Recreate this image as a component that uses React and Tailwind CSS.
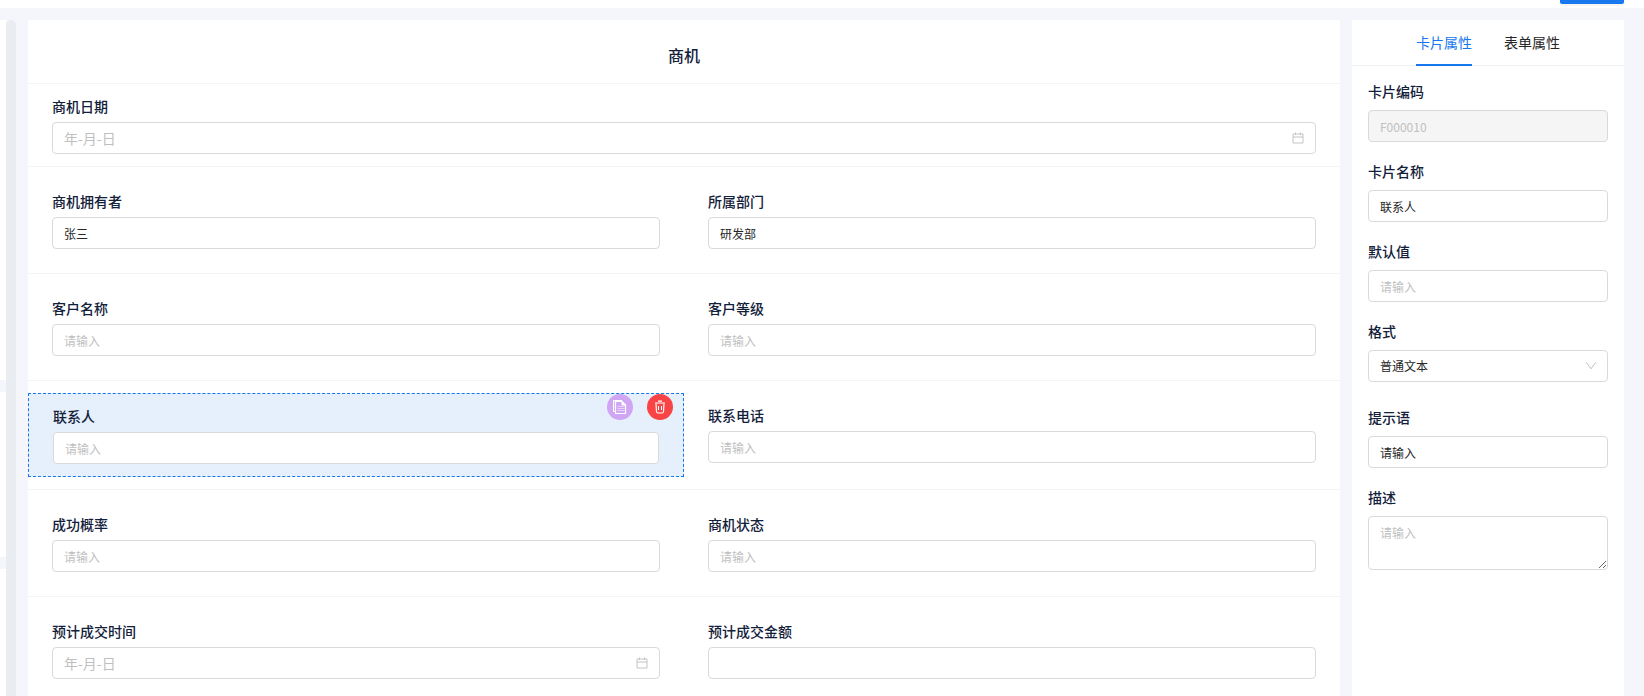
import React, { useState } from "react";
import clsx from "clsx";

const LEFT_CARDS = ["h-[360px]", "h-[165px]", "flex-1"];

const ROWS = [
  [
    { id: "owner", label: "商机拥有者", value: "张三" },
    { id: "dept", label: "所属部门", value: "研发部" },
  ],
  [
    { id: "customer", label: "客户名称", placeholder: "请输入" },
    { id: "level", label: "客户等级", placeholder: "请输入" },
  ],
  [
    { id: "contact", label: "联系人", placeholder: "请输入" },
    { id: "phone", label: "联系电话", placeholder: "请输入" },
  ],
  [
    { id: "rate", label: "成功概率", placeholder: "请输入" },
    { id: "status", label: "商机状态", placeholder: "请输入" },
  ],
  [
    { id: "dealDate", label: "预计成交时间", placeholder: "年-月-日", type: "date" },
    { id: "dealAmount", label: "预计成交金额" },
  ],
];

const inputClass =
  "block w-full h-8 px-[11px] bg-white border border-[#d9d9d9] rounded text-[#262626] placeholder:text-[#bfbfbf] outline-none focus:border-[#1677ee]";

function CalendarIcon() {
  return (
    <svg viewBox="0 0 12 12" className="w-3 h-3" fill="none" stroke="#c4c4c4" aria-hidden="true">
      <path d="M1 2h10v9H1zM1 5h10M3.5 .5v2.5M8.5 .5v2.5" />
    </svg>
  );
}

function CopyIcon() {
  return (
    <svg viewBox="0 0 14 14" className="w-3.5 h-3.5" fill="none" stroke="#fff" aria-hidden="true">
      <path d="M2.5 11.5h-2v-11h8.5" strokeWidth="1.2" />
      <path d="M2.5 1.5h6.5l3.5 3.5v8.5h-10z" strokeWidth="1.2" />
      <path d="M9 1.5l3.5 3.5H9z" fill="#fff" />
      <path d="M4.5 6.5h7M4.5 8.5h7M4.5 10.5h7" strokeOpacity=".5" />
    </svg>
  );
}

function TrashIcon() {
  return (
    <svg viewBox="0 0 14 14" className="w-3.5 h-3.5" fill="none" stroke="#fff" aria-hidden="true">
      <path d="M2 3h10M5 1.2h4" strokeWidth="1.2" />
      <path d="M3 3.5l.5 8c.1 1 .6 1.5 1.5 1.5h4c.9 0 1.4-.5 1.5-1.5l.5-8" strokeWidth="1.2" />
      <path d="M5.5 6v4M8.5 6v4" />
    </svg>
  );
}

function FormField({ field }) {
  const isDate = field.type === "date";
  return (
    <div>
      <label htmlFor={field.id} className="block mb-1.5 text-sm leading-5 font-medium text-[#12203a]">
        {field.label}
      </label>
      <div className="relative">
        <input
          id={field.id}
          type="text"
          defaultValue={field.value}
          placeholder={field.placeholder}
          className={clsx(inputClass, isDate ? "text-sm" : "text-xs")}
        />
        {isDate && (
          <span className="absolute inset-y-0 right-3 flex items-center pointer-events-none">
            <CalendarIcon />
          </span>
        )}
      </div>
    </div>
  );
}

function FormCell({ field, selected, onSelect }) {
  return (
    <div
      onClick={onSelect}
      className={clsx(
        "relative min-w-0 px-6 py-3",
        selected && "bg-[#e6f0fc] border border-dashed border-[#1677ee]"
      )}
    >
      <FormField field={field} />
      {selected && (
        <div className="absolute top-0 right-2.5 flex gap-3.5">
          <button type="button" aria-label="复制" className="w-[26px] h-[26px] rounded-full bg-[#d0a5f4] flex items-center justify-center">
            <CopyIcon />
          </button>
          <button type="button" aria-label="删除" className="w-[26px] h-[26px] rounded-full bg-[#f84444] flex items-center justify-center">
            <TrashIcon />
          </button>
        </div>
      )}
    </div>
  );
}

function PropItem({ id, label, className = "", children }) {
  return (
    <div className={className}>
      <label htmlFor={id} className="block mb-2 text-sm leading-[22px] font-medium text-[#12203a]">
        {label}
      </label>
      {children}
    </div>
  );
}

function PropsPanel() {
  const [tab, setTab] = useState("卡片属性");

  return (
    <aside className="w-68 shrink-0 bg-white">
      <div className="flex justify-center gap-8 border-b border-[#f0f0f0]">
        {["卡片属性", "表单属性"].map((name) => (
          <button
            key={name}
            type="button"
            onClick={() => setTab(name)}
            className={clsx(
              "-mb-px py-[11px] text-sm leading-[22px] border-b-2",
              tab === name ? "text-[#1677ee] border-[#1677ee]" : "text-[#262626] border-transparent"
            )}
          >
            {name}
          </button>
        ))}
      </div>

      <div className="flex flex-col gap-4.5 px-4 pt-3.5">
        <PropItem id="code" label="卡片编码">
          <input
            id="code"
            disabled
            defaultValue="F000010"
            className="block w-full h-8 px-[11px] text-xs bg-[#f5f5f5] border border-[#d9d9d9] rounded text-[#bfbfbf]"
          />
        </PropItem>
        <PropItem id="name" label="卡片名称">
          <input id="name" defaultValue="联系人" className={clsx(inputClass, "text-xs")} />
        </PropItem>
        <PropItem id="default" label="默认值">
          <input id="default" placeholder="请输入" className={clsx(inputClass, "text-xs")} />
        </PropItem>
        <PropItem id="format" label="格式" className="pb-1.5">
          <div className="relative">
            <select id="format" className={clsx(inputClass, "text-xs appearance-none")}>
              <option>普通文本</option>
            </select>
            <span className="absolute inset-y-0 right-[11px] flex items-center pointer-events-none">
              <svg viewBox="0 0 12 12" className="w-3 h-3" fill="none" stroke="#bfbfbf" aria-hidden="true">
                <path d="M1.2 2.2L6 8.8l4.8-6.6" />
              </svg>
            </span>
          </div>
        </PropItem>
        <PropItem id="hint" label="提示语">
          <input id="hint" defaultValue="请输入" className={clsx(inputClass, "text-xs")} />
        </PropItem>
        <PropItem id="desc" label="描述">
          <textarea
            id="desc"
            placeholder="请输入"
            className="block w-full h-[54px] px-[11px] py-1.5 text-xs leading-5 bg-white border border-[#d9d9d9] rounded text-[#262626] placeholder:text-[#bfbfbf] outline-none resize-y"
          />
        </PropItem>
      </div>
    </aside>
  );
}

export default function App() {
  const [active, setActive] = useState("contact");

  return (
    <div className="h-screen overflow-hidden flex flex-col bg-[#f5f6fb] font-['Noto_Sans_CJK_SC',sans-serif]">
      <header className="h-2 shrink-0 bg-white flex justify-end items-start pr-5">
        <button type="button" aria-label="保存" className="w-16 h-1 rounded-b-xs bg-[#1677ee] shadow-[0_2px_0_rgba(0,0,0,0.04)]" />
      </header>

      <div className="flex-1 min-h-0 flex gap-3 pt-3 pr-5">
        <div className="flex shrink-0">
          <div className="w-1.5 flex flex-col gap-3">
            {LEFT_CARDS.map((height) => (
              <div key={height} className={clsx("bg-white", height)} />
            ))}
          </div>
          <div className="w-2.5 rounded-t-full bg-[#e9edf2]" />
        </div>

        <main className="flex-1 min-w-0 bg-white">
          <h1 className="pt-6 pb-4 text-base leading-[23px] font-medium text-center text-[#12203a]">商机</h1>
          <div className="border-t border-[#f3f4f6] px-6 py-3">
            <FormField field={{ id: "date", label: "商机日期", placeholder: "年-月-日", type: "date" }} />
          </div>
          {ROWS.map((row) => (
            <div key={row[0].id} className="grid grid-cols-2 py-3 border-t border-[#f3f4f6]">
              {row.map((field) => (
                <FormCell
                  key={field.id}
                  field={field}
                  selected={active === field.id}
                  onSelect={() => setActive(field.id)}
                />
              ))}
            </div>
          ))}
        </main>

        <PropsPanel />
      </div>
    </div>
  );
}
